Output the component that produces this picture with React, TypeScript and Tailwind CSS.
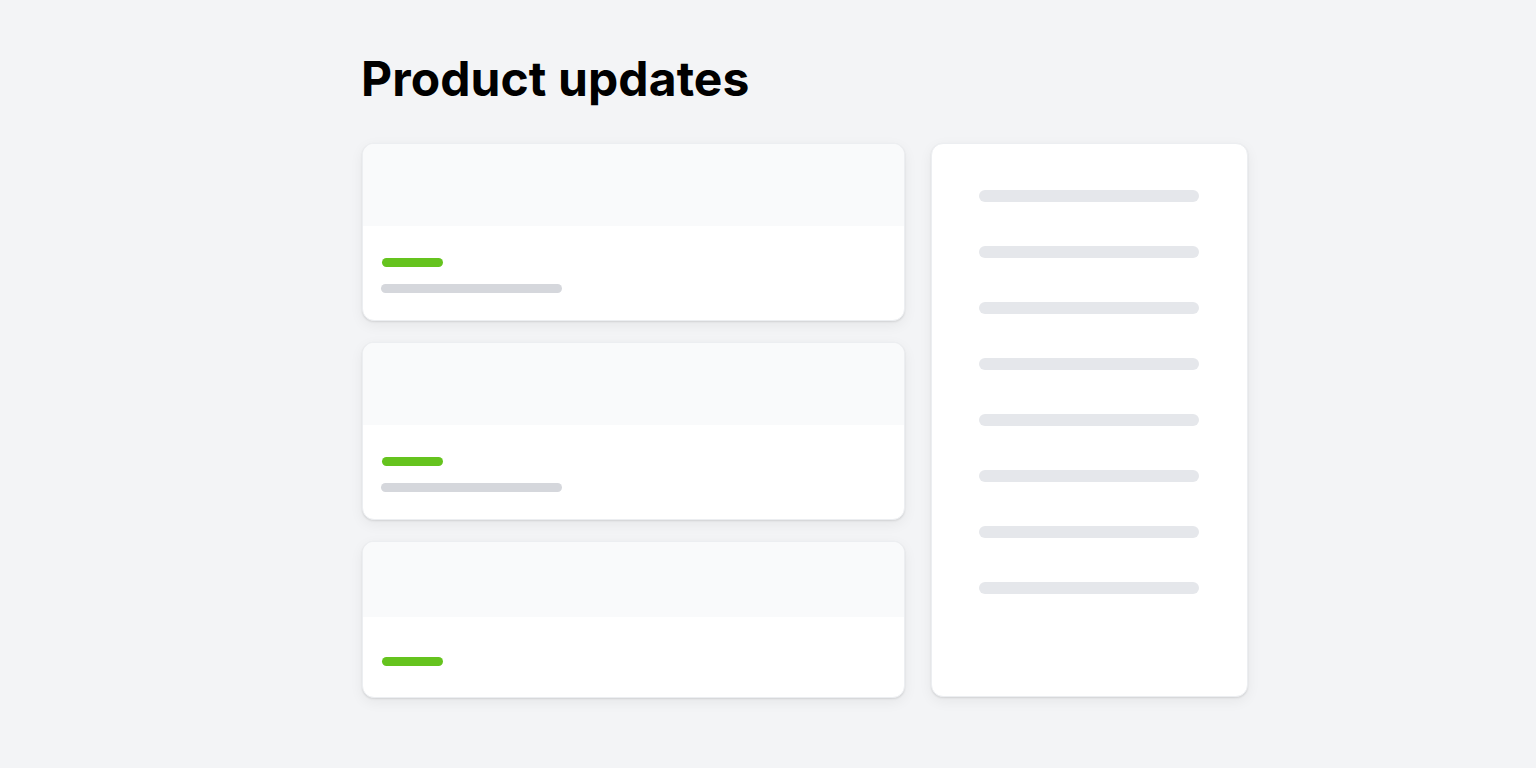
const updates = [
    { id: 1, header: 'h-[82px]', body: 'pt-[32px] pb-[27px]', subtitle: true },
    { id: 2, header: 'h-[82px]', body: 'pt-[32px] pb-[27px]', subtitle: true },
    { id: 3, header: 'h-[75px]', body: 'pt-[40px] pb-[31px]', subtitle: false },
];

const sideRows = Array.from({ length: 8 }, (_, i) => i);

const cardShell =
    'bg-white rounded-[12px] border border-[#eceef1] overflow-hidden shadow-[0_1px_2px_rgba(0,0,0,0.10),0_4px_14px_rgba(0,0,0,0.06)]';

function UpdateCard({ header, body, subtitle }: { header: string; body: string; subtitle: boolean }) {
    return (
        <div className={cardShell}>
            <div className={`${header} bg-[#f9fafb]`} />
            <div className={`${body} px-[18px] flex flex-col`}>
                <div className="h-[9px] w-[61px] ml-[1px] rounded-full bg-[#65c31e]" />
                {subtitle && <div className="mt-[17px] h-[9px] w-[181px] rounded-full bg-[#d5d7dc]" />}
            </div>
        </div>
    );
}

export default function App() {
    return (
        <div className="min-h-screen bg-[#f3f4f6] font-['Inter','Liberation_Sans',sans-serif]">
            <div className="pl-[362px] pt-[50px]">
                <h1 className="text-[48px] leading-[58px] font-bold tracking-[0.002em] text-black -ml-[1px]">
                    Product updates
                </h1>

                <div className="mt-[35px] flex gap-[26px] items-start">
                    <div className="w-[543px] flex flex-col gap-[21px]">
                        {updates.map((u) => (
                            <UpdateCard key={u.id} header={u.header} body={u.body} subtitle={u.subtitle} />
                        ))}
                    </div>

                    <div className={`${cardShell} w-[317px] h-[554px] pt-[46px] pl-[47px] flex flex-col gap-[44px]`}>
                        {sideRows.map((r) => (
                            <div key={r} className="h-[12px] w-[220px] rounded-full bg-[#e5e7eb]" />
                        ))}
                    </div>
                </div>
            </div>
        </div>
    );
}
